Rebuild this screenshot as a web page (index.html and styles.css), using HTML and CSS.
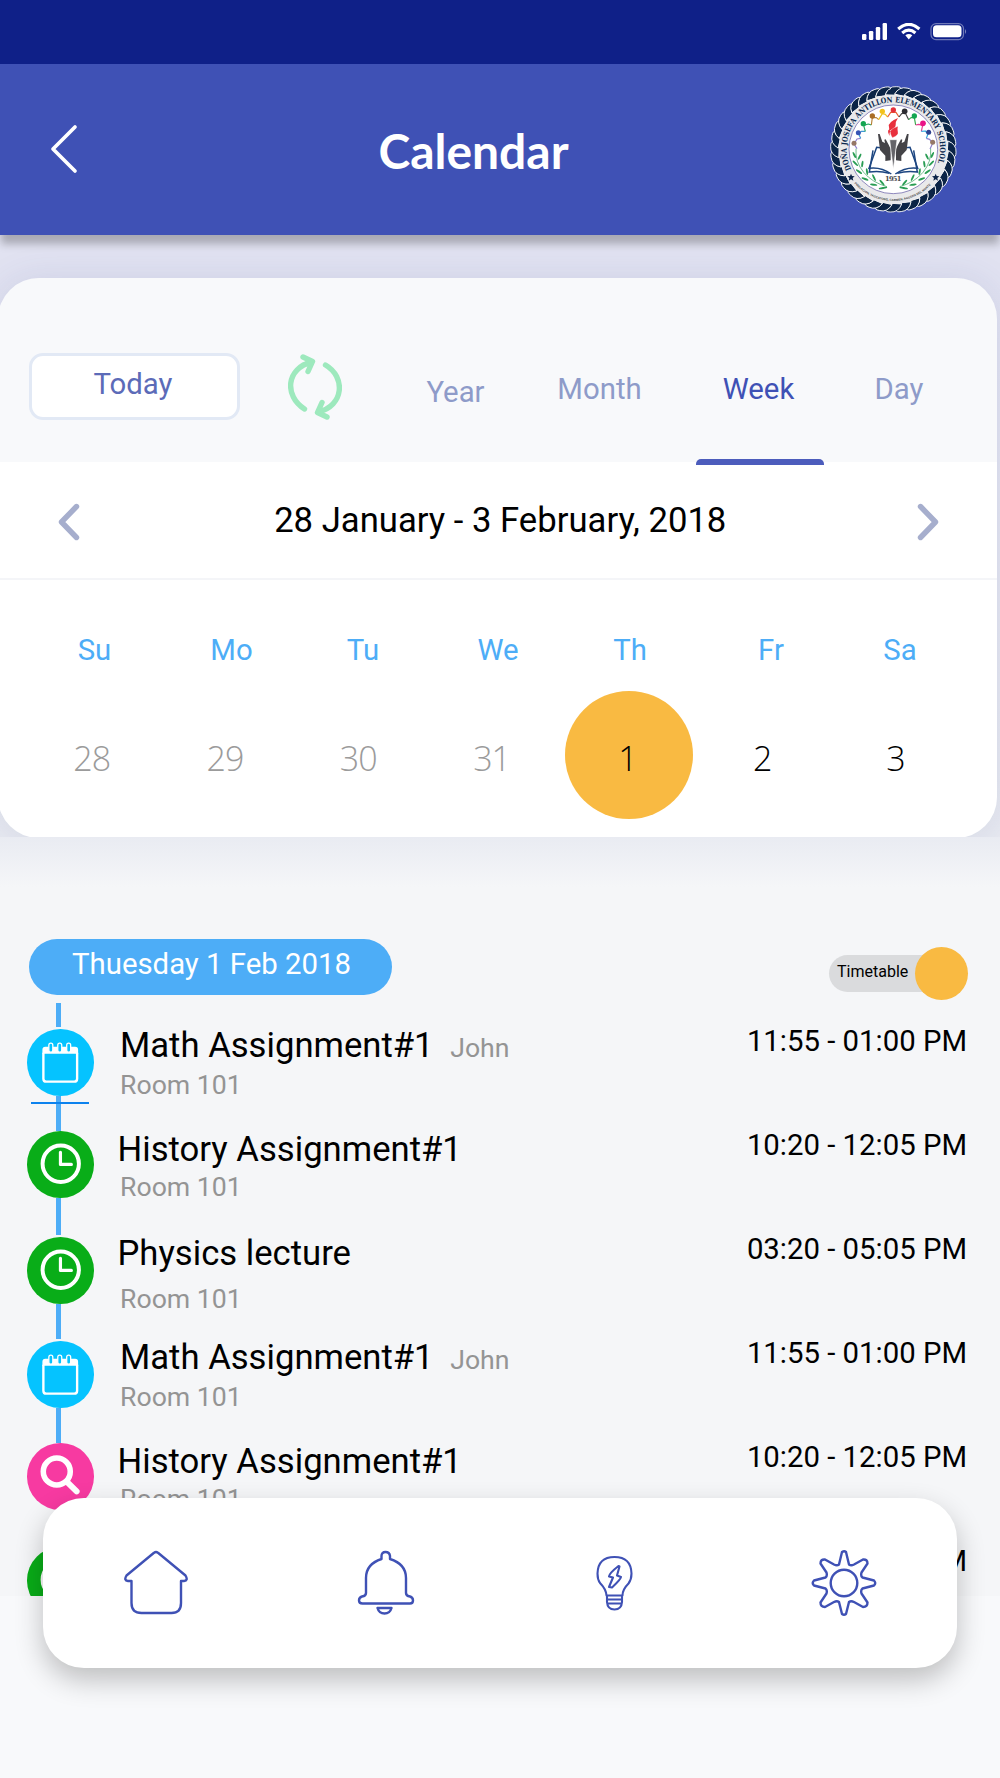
FILE: index.html
```html
<!DOCTYPE html>
<html lang="en">
<head>
    <meta charset="UTF-8">
    <meta name="viewport" content="width=device-width, initial-scale=1.0">
    <title>Calendar</title>
    <link rel="stylesheet" href="styles.css">
</head>
<body>
    <!-- shared icons -->
    <svg class="defs" width="0" height="0">
        <symbol id="icon-note" viewBox="0 0 67 67">
            <path d="M16.500 24v26q0 3 3 3h28q3 0 3-3V24" fill="none" stroke="#fff" stroke-width="2.4"/>
            <path d="M15.500 25v-4q0-3 3-3h30q3 0 3 3v4z" fill="#fff"/>
            <g fill="#05c3ff" stroke="#fff" stroke-width="1.3">
                <rect x="22" y="14.3" width="4" height="9" rx="2"/>
                <rect x="31" y="14.3" width="4" height="9" rx="2"/>
                <rect x="40" y="14.3" width="4" height="9" rx="2"/>
            </g>
        </symbol>
        <symbol id="icon-clock" viewBox="0 0 67 67">
            <circle cx="34" cy="33" r="18.3" fill="none" stroke="#fff" stroke-width="4"/>
            <path d="M33.7 21.5v12.2h11" fill="none" stroke="#fff" stroke-width="3.2" stroke-linecap="round" stroke-linejoin="round"/>
        </symbol>
        <symbol id="icon-search" viewBox="0 0 67 67">
            <circle cx="30" cy="28.7" r="13.6" fill="none" stroke="#fff" stroke-width="5.6"/>
            <path d="M40 39l10 9.7" stroke="#fff" stroke-width="6" stroke-linecap="round"/>
        </symbol>
    </svg>

    <div class="status-bar">
        <svg width="107" height="20" viewBox="0 0 107 20">
            <g fill="#fff">
                <rect x="0" y="11" width="4.4" height="6" rx="1.2"/>
                <rect x="6.9" y="8" width="4.4" height="9" rx="1.2"/>
                <rect x="13.8" y="4" width="4.4" height="13" rx="1.2"/>
                <rect x="20.6" y="0" width="4.4" height="17" rx="1.2"/>
                <path d="M43.3 12.300q3.5-2.500 7 0L46.800 16.500z"/>
            </g>
            <path d="M36.200 6q10.600-9.400 21.200 0M40.200 10q6.600-5.800 13.200 0" fill="none" stroke="#fff" stroke-width="3.100"/>
            <rect x="69" y="0.600" width="32.500" height="16" rx="5" fill="none" stroke="#fff" stroke-opacity=".4" stroke-width="1.200"/>
            <rect x="71" y="2.300" width="28.500" height="12" rx="3.500" fill="#fff"/>
            <path d="M103 6q2.200 2.500 0 5z" fill="#fff" fill-opacity=".45"/>
        </svg>
    </div>

    <header class="header">
        <svg class="back" width="28" height="50" viewBox="0 0 28 50">
            <path d="M25 3L3 25l22 22" fill="none" stroke="#fff" stroke-width="3.700" stroke-linecap="round" stroke-linejoin="round"/>
        </svg>
        <h1>Calendar</h1>
        <svg class="school-logo" width="138" height="138" viewBox="0 0 414 414">
            <defs>
                <path id="arc-top" d="M79 268A140 140 0 1 1 331 268"/>
                <path id="arc-bottom" d="M88 310A156 156 0 0 0 322 310"/>
                <g id="twig" fill="#2a9d54">
                    <path d="M93 206q-3 40 23 71t70 43" fill="none" stroke="#2a9d54" stroke-width="2"/>
                    <ellipse cx="88" cy="225" rx="3" ry="10" transform="rotate(-25 88 225)"/>
                    <ellipse cx="104" cy="230" rx="3" ry="10" transform="rotate(25 104 230)"/>
                    <ellipse cx="91" cy="250" rx="3" ry="11" transform="rotate(-45 91 250)"/>
                    <ellipse cx="112" cy="252" rx="3" ry="10" transform="rotate(8 112 252)"/>
                    <ellipse cx="102" cy="275" rx="3" ry="11" transform="rotate(-55 102 275)"/>
                    <ellipse cx="126" cy="275" rx="3" ry="10" transform="rotate(-8 126 275)"/>
                    <ellipse cx="120" cy="297" rx="3" ry="11" transform="rotate(-70 120 297)"/>
                    <ellipse cx="147" cy="293" rx="3" ry="11" transform="rotate(-25 147 293)"/>
                    <ellipse cx="146" cy="314" rx="3" ry="11" transform="rotate(-82 146 314)"/>
                    <ellipse cx="171" cy="308" rx="3" ry="11" transform="rotate(-40 171 308)"/>
                    <ellipse cx="174" cy="324" rx="3" ry="13" transform="rotate(-100 174 324)"/>
                </g>
            </defs>
            <!-- rope border -->
            <circle cx="205" cy="208" r="185" fill="#fff"/>
            <circle cx="205" cy="208" r="174" fill="none" stroke="#0b2446" stroke-width="16"/>
            <g id="rope"></g>
            <circle cx="205" cy="208" r="164" fill="#e9e9eb"/>
            <circle cx="205" cy="208" r="133" fill="#fff" stroke="#5a52a0" stroke-width="2"/>
            <text class="logo-name"><textPath href="#arc-top" textLength="545" lengthAdjust="spacingAndGlyphs">DOÑA JOSEFA ANTILLON ELEMENTARY SCHOOL</textPath></text>
            <text class="logo-place"><textPath href="#arc-bottom" textLength="258" lengthAdjust="spacingAndGlyphs">POBLACION, TAGCATONG, CARMEN, AGUSAN DEL NORTE</textPath></text>
            <path id="star" d="M78 281l3 7 8 1-6 5 2 8-7-4-7 4 2-8-6-5 8-1z" fill="#0c2348"/>
            <use href="#star" x="254"/>
            <!-- chain of people -->
            <g fill="none" stroke-width="3.500" stroke-linejoin="round">
                <path d="M96 206l-9-14 9-15 11-2" stroke="#9080d0"/>
                <path d="M107 175l-6-13 8-8 12 0" stroke="#3f9ad5"/>
                <path d="M121 154l-5-18 14-4 9 3" stroke="#28a860"/>
                <path d="M139 135l3-22 12 0 7 6" stroke="#b88338"/>
                <path d="M161 119l11-18 9 2 7 8" stroke="#f0c11c"/>
                <path d="M188 111l9-14h16l9 14" stroke="#e85e36"/>
                <path d="M222 111l8-10 11-2 10 20" stroke="#444"/>
                <path d="M251 119l7-6 10 0 4 22" stroke="#35aa4a"/>
                <path d="M272 135l9-2 12 3-4 18" stroke="#e83a92"/>
                <path d="M289 154l12-1 8 9-5 13" stroke="#33a9e0"/>
                <path d="M304 175l10 3 9 12-8 17" stroke="#9080d0"/>
            </g>
            <circle cx="87" cy="190" r="7.500" fill="#967866"/>
            <circle cx="100" cy="158" r="7.500" fill="#3554b5"/>
            <circle cx="115" cy="131" r="8" fill="#13a652"/>
            <circle cx="142" cy="108" r="8" fill="#a96d25"/>
            <circle cx="172" cy="94" r="8" fill="#f3c21c"/>
            <circle cx="205" cy="90" r="8" fill="#e6303b"/>
            <circle cx="239" cy="94" r="8.500" fill="#2b2b30"/>
            <circle cx="268" cy="108" r="8" fill="#13a652"/>
            <circle cx="294" cy="130" r="8.500" fill="#ea1387"/>
            <circle cx="311" cy="157" r="7.500" fill="#2d418f"/>
            <circle cx="323" cy="187" r="7.500" fill="#967866"/>
            <use href="#twig"/>
            <use href="#twig" transform="translate(410 0) scale(-1 1)"/>
            <!-- book -->
            <g fill="none" stroke="#1c4580" stroke-width="4.500">
                <path d="M173 204l-18-2-23 63q35-5 67 17"/>
                <path d="M144 211l-11 65q30-5 60 4"/>
                <path d="M237 204l18-2 23 63q-35-5-67 17"/>
                <path d="M266 211l11 65q-30-5-60 4"/>
            </g>
            <!-- hands and torch -->
            <path id="hand" d="M159 162l5 0 8 23 8 4-2-10 4-1 9 16 6 13v34l-16 2v-16l-16-17z" fill="#444347"/>
            <use href="#hand" transform="translate(410 0) scale(-1 1)"/>
            <path d="M194 179h22l-5 42-6 46-6-46z" fill="#656469" stroke="#fff" stroke-width="2"/>
            <path d="M219 114q-32 13-27 27 2 6-1 12 22-8 21-18-1-10 7-21z" fill="#e8303d"/>
            <path d="M219 139q-26 8-23 20 1 6 6 14 20-7 17-17-2-8 0-17z" fill="#e8303d" stroke="#fff"/>
            <path d="M191 149q-5 7 4 19-4-10 3-14z" fill="#e8303d"/>
            <text class="logo-year" x="180" y="303" textLength="49">1951</text>
        </svg>
    </header>

    <div class="card-wrap">
        <section class="card">
            <div class="toolbar">
                <button class="today" type="button">Today</button>
                <svg class="refresh" width="54" height="66" viewBox="0 0 54 66">
                    <g fill="none" stroke="#9de9bd" stroke-width="5.400" stroke-linecap="round" stroke-linejoin="round">
                        <path d="M16.500 55C-4 42-2 14 24 8M15 3l9.500 4.500L20 17.500"/>
                        <path d="M37.500 11C58 23 56 52 30 58M39 63l-9.500-4.500L34 48.500"/>
                    </g>
                </svg>
                <nav class="tabs">
                    <span class="tab tab-year">Year</span>
                    <span class="tab tab-month">Month</span>
                    <span class="tab tab-week active">Week</span>
                    <span class="tab tab-day">Day</span>
                </nav>
            </div>

            <div class="range">
                <svg width="22" height="38" viewBox="0 0 22 38">
                    <path d="M18.500 3.500L3.500 19l15 15.500" fill="none" stroke="#a6aecd" stroke-width="5.400" stroke-linecap="round" stroke-linejoin="round"/>
                </svg>
                <span>28 January - 3 February, 2018</span>
                <svg width="22" height="38" viewBox="0 0 22 38">
                    <path d="M3.500 3.500l15 15.500-15 15.500" fill="none" stroke="#a6aecd" stroke-width="5.400" stroke-linecap="round" stroke-linejoin="round"/>
                </svg>
            </div>

            <div class="weekdays">
                <span>Su</span>
                <span>Mo</span>
                <span>Tu</span>
                <span>We</span>
                <span>Th</span>
                <span>Fr</span>
                <span>Sa</span>
            </div>
            <div class="days">
                <span class="muted">28</span>
                <span class="muted">29</span>
                <span class="muted">30</span>
                <span class="muted">31</span>
                <span class="selected">1</span>
                <span>2</span>
                <span>3</span>
            </div>
        </section>
    </div>

    <main class="agenda">
        <div class="agenda-head">
            <div class="date-pill">Thuesday 1 Feb 2018</div>
            <div class="toggle">
                <span class="track">Timetable</span>
                <span class="knob"></span>
            </div>
        </div>
        <div class="line-start"></div>

        <div class="item low marked">
            <div class="marker"><svg class="dot blue"><use href="#icon-note"/></svg></div>
            <div class="info math">
                <p class="title">Math Assignment#1 <small>John</small></p>
                <p class="room">Room 101</p>
            </div>
            <time>11:55 - 01:00 PM</time>
        </div>
        <div class="item">
            <div class="marker gap-end"><svg class="dot green"><use href="#icon-clock"/></svg></div>
            <div class="info">
                <p class="title">History Assignment#1</p>
                <p class="room tight">Room 101</p>
            </div>
            <time>10:20 - 12:05 PM</time>
        </div>
        <div class="item low">
            <div class="marker gap-end"><svg class="dot green"><use href="#icon-clock"/></svg></div>
            <div class="info">
                <p class="title">Physics lecture</p>
                <p class="room loose">Room 101</p>
            </div>
            <time>03:20 - 05:05 PM</time>
        </div>
        <div class="item low">
            <div class="marker"><svg class="dot blue"><use href="#icon-note"/></svg></div>
            <div class="info math">
                <p class="title">Math Assignment#1 <small>John</small></p>
                <p class="room">Room 101</p>
            </div>
            <time>11:55 - 01:00 PM</time>
        </div>
        <div class="item">
            <div class="marker last"><svg class="dot pink"><use href="#icon-search"/></svg></div>
            <div class="info">
                <p class="title">History Assignment#1</p>
                <p class="room tight">Room 101</p>
            </div>
            <time>10:20 - 12:05 PM</time>
        </div>
        <div class="item">
            <div class="marker last"><svg class="dot green"><use href="#icon-clock"/></svg></div>
            <div class="info"></div>
            <time>03:20 - 05:05 PM</time>
        </div>
    </main>

    <!-- floating bottom menu -->
    <nav class="bottom-nav">
        <svg width="66" height="66" viewBox="0 0 66 66">
            <path d="M8.500 31v22q0 10 10 10h30q9.500 0 9.500-10V31h3q4.500-.5 1.500-5.500L35 2.800q-2-1.800-4 0L3.500 25.500Q.5 30.500 5 31z"/>
        </svg>
        <svg width="66" height="66" viewBox="-1 0 66 66">
            <path d="M28.500 9V6q0-4 4-4t4.500 4v3q16 5 16 19v15q0 3 4 3.500 3 1 3 4t-3 3H9.500q-3.500 0-3.500-3 0-3 3-4 4-.5 4-3.500V28q0-14 15.500-19zM24.500 58h14q-1.500 5.500-7 5.500t-7-5.500z"/>
        </svg>
        <svg width="66" height="66" viewBox="0 1 66 66" class="thin">
            <path d="M24.500 46.500Q24 40 18 34q-2.500-3.500-2.500-9.500Q16 8 32.500 8T49.500 24.500q0 6-3 10-6 6-6 12zM25 46.500v6.500q.5 7.500 7.500 7.500t7.500-7.500v-6.500M25 50.500h15M25 54.500h15M36.500 17q-9 7-9.500 10.500l4 1-4 9.500 3 .5q9-8.500 9-10.500l-4-1.500 2.500-9z"/>
        </svg>
        <svg width="66" height="66" viewBox="0 0 66 66">
            <path d="M31 2q2.300-1.500 4 0l3 12.500q2 1.500 5 0l9-5q4.500-.5 4.500 4l-6 9q-1 3.500 1 5L63 30.500q2.500 2.500 0 5L51.500 38.500q-2 1.500-1 5l6 9q0 4.500-4.500 4.500l-9-5q-3-1.500-5 0L35 64q-2 1.500-4 0l-3-12q-2-1.500-5 0l-9 5q-4.500 0-4.500-4.500l6-9q1-3.500-1-5L3 35.500q-2.500-2.500 0-5L14.500 27.500q2-1.500 1-5L9.500 13.500q0-4.500 4.500-4l9 5q3 1.500 5 0z"/>
            <circle cx="33" cy="33" r="13.300"/>
        </svg>
    </nav>

    <script>
        // rope strands around the school seal
        const rope = document.getElementById('rope');
        for (let i = 0; i < 36; i++) {
            const strand = document.createElementNS('http://www.w3.org/2000/svg', 'path');
            strand.setAttribute('d', 'M180 44Q190 18 214 20Q230 20 228 28Q216 28 208 46z');
            strand.setAttribute('fill', '#0b2446');
            strand.setAttribute('stroke', '#fff');
            strand.setAttribute('stroke-width', '2.6');
            strand.setAttribute('transform', 'rotate(' + i * 10 + ' 205 208)');
            rope.appendChild(strand);
        }
    </script>
</body>
</html>
```
FILE: styles.css
```css
* {
    box-sizing: border-box;
}
body {
    margin: 0;
    width: 1000px;
    height: 1778px;
    overflow: hidden;
    background-color: #f8f9fb;
    color: #000;
    font-family: Roboto, "Liberation Sans", sans-serif;
    font-size: 29.33px;
}
p, h1 {
    margin: 0;
    font-weight: normal;
}
.defs {
    position: absolute;
}

/* --- Header --- */
.status-bar {
    height: 64px;
    padding: 23px 31px 0 0;
    background-color: #0f2088;
    display: flex;
    justify-content: flex-end;
}
.header {
    position: relative;
    z-index: 2;
    height: 171px;
    padding: 0 37px 2px 50px;
    background-color: #3f51b5;
    box-shadow: 0 10px 8px -1px rgba(0, 0, 0, 0.25);
    display: flex;
    align-items: center;
    justify-content: space-between;
}
.header h1 {
    margin: 4px 0 0 44px;
    color: #fff;
    font-family: Lato, sans-serif;
    font-size: 48px;
    font-weight: bold;
}
.logo-name {
    font-family: "DejaVu Serif", serif;
    font-size: 23px;
    font-weight: bold;
    fill: #0c2a50;
}
.logo-place {
    font-family: "Liberation Sans", sans-serif;
    font-size: 9px;
    font-weight: bold;
    fill: #444;
}
.logo-year {
    font-family: "DejaVu Serif", serif;
    font-size: 20px;
    font-weight: bold;
    fill: #48484c;
}

/* --- Calendar card --- */
.card-wrap {
    height: 602px;
    padding-top: 42.5px;
    background: linear-gradient(#e1e2f1 0, #e1e2f1 42px, #e8eaf1 100%);
}
.card {
    width: 999px;
    height: 560px;
    margin-left: -2px;
    padding-left: 2px;
    border-radius: 41px;
    background: linear-gradient(#f8f9fb 184px, #fff 184px);
    box-shadow: 0 2px 36px rgba(63, 81, 150, 0.13);
}
.toolbar {
    height: 187px;
    padding: 75px 0 0 29px;
    display: flex;
    align-items: flex-start;
}
.today {
    width: 211px;
    height: 67px;
    padding: 0 3px 5px 0;
    border: 3px solid #e2e9f5;
    border-radius: 14px;
    background-color: #fff;
    color: #5c6bb8;
    font: inherit;
}
.refresh {
    margin: 1px 0 0 48px;
}
.tabs {
    flex: 1;
    display: flex;
    height: 112px;
    margin-left: 65px;
    color: #8e9bc9;
    line-height: 34px;
}
.tab {
    padding-top: 19px;
    text-align: center;
}
.tab-year {
    width: 98px;
    padding: 22px 1px 0 0;
}
.tab-month {
    width: 191px;
    padding-right: 2px;
}
.tab-week {
    width: 128px;
    padding-right: 3px;
}
.tab-day {
    width: 151px;
    padding-right: 1px;
}
.tab.active {
    display: flex;
    flex-direction: column;
    align-items: center;
    justify-content: space-between;
    color: #3f51b5;
}
.tab.active::after {
    content: "";
    width: 128px;
    height: 6px;
    margin-right: -3px;
    border-radius: 5px 5px 0 0;
    background-color: #4c5cbc;
}
.range {
    height: 115px;
    padding: 2px 58px 0 57.5px;
    border-bottom: 2px solid #f4f5f8;
    display: flex;
    align-items: center;
    justify-content: space-between;
    font-size: 34.67px;
}
.range span {
    margin-top: -5px;
    padding-left: 4px;
}
.weekdays,
.days {
    display: grid;
}
.weekdays {
    margin-top: 53px;
    grid-template-columns: 131px 143px 120px 150px 114px 168px 90px;
    padding-left: 29px;
    line-height: 34px;
    color: #4dadf7;
    text-align: center;
}
.days {
    height: 128px;
    margin-top: 24.5px;
    padding-left: 25px;
    grid-template-columns: repeat(7, 133.3px);
    align-items: center;
    justify-items: center;
    font-family: "Open Sans", sans-serif;
    font-weight: 300;
    font-size: 34px;
    letter-spacing: -1px;
}
.days span {
    padding: 6px 0 0 8px;
}
.days .muted {
    padding-left: 0;
    color: #9b9b9b;
}
.days .selected {
    width: 128px;
    height: 128px;
    margin-left: 8px;
    padding: 0 3px 0 0;
    border-radius: 50%;
    background-color: #f9ba42;
    line-height: 134px;
    text-align: center;
}

/* --- Agenda --- */
.agenda {
    height: 759px;
    padding-top: 102px;
    overflow: hidden;
    background: linear-gradient(rgba(225, 228, 238, 0.6), rgba(245, 246, 248, 0) 50px) #f5f6f8;
}
.agenda-head {
    display: flex;
    justify-content: space-between;
    height: 64px;
    padding: 0 32px 0 29px;
}
.date-pill {
    width: 363px;
    height: 56px;
    padding-left: 2px;
    border-radius: 28px;
    background-color: #4dadf7;
    color: #fff;
    line-height: 50px;
    text-align: center;
}
.toggle {
    display: flex;
    align-items: center;
    height: 53px;
    margin-top: 8px;
}
.track {
    width: 112px;
    height: 37px;
    margin-right: -26px;
    padding-left: 8px;
    border-radius: 19px;
    background-color: #dadbdd;
    font-size: 16px;
    line-height: 34px;
}
.knob {
    width: 53px;
    height: 53px;
    border-radius: 50%;
    background-color: #f9ba42;
}
.line-start {
    width: 5px;
    height: 24px;
    margin-left: 56px;
    background-color: #4dadf7;
}
.item {
    display: flex;
    height: 104px;
    padding: 0 33px 0 27px;
}
.marker {
    position: relative;
    width: 66.5px;
    display: flex;
    flex-direction: column;
    align-items: center;
}
.marker::after {
    content: "";
    flex: 1;
    width: 5px;
    margin-right: 3px;
    background-color: #4dadf7;
}
.low .marker {
    padding-top: 2px;
}
.marker.last::after {
    display: none;
}
/* current lesson line */
.marked .marker::before {
    content: "";
    position: absolute;
    left: 4px;
    top: 75px;
    width: 58px;
    height: 2px;
    background-color: #0c82ee;
}
.dot {
    width: 66.5px;
    height: 66.5px;
    border-radius: 50%;
}
.blue {
    background-color: #05c3ff;
}
.green {
    background-color: #09ad18;
}
.pink {
    background-color: #f73aa1;
}
.info {
    flex: 1;
    padding-left: 24px;
}
.math {
    padding-left: 26.5px;
}
.title {
    font-size: 34.67px;
    line-height: 36px;
    white-space: nowrap;
}
.title small {
    margin-left: 8px;
    color: #949494;
    font-size: 26.67px;
}
.room {
    color: #949494;
    font-size: 26.67px;
    line-height: 30px;
}
.info .room {
    margin: 5px 0 0 2.5px;
}
.math .room {
    margin: 4px 0 0;
}
.info .tight {
    margin-top: 4.5px;
}
.info .loose {
    margin-top: 12.5px;
}
.item time {
    line-height: 29px;
}

/* --- Bottom menu --- */
.bottom-nav {
    position: absolute;
    left: 43px;
    top: 1498px;
    width: 914px;
    height: 170px;
    padding-top: 52px;
    border-radius: 41px;
    background-color: #fff;
    box-shadow: 0 12px 28px rgba(0, 0, 0, 0.24);
    display: grid;
    grid-template-columns: repeat(4, 229.2px);
    justify-items: center;
    justify-content: center;
}
.bottom-nav svg {
    fill: none;
    stroke: #3f51b5;
    stroke-width: 2.4;
    stroke-linejoin: round;
}
.bottom-nav .thin {
    stroke-width: 2.1;
}
```
